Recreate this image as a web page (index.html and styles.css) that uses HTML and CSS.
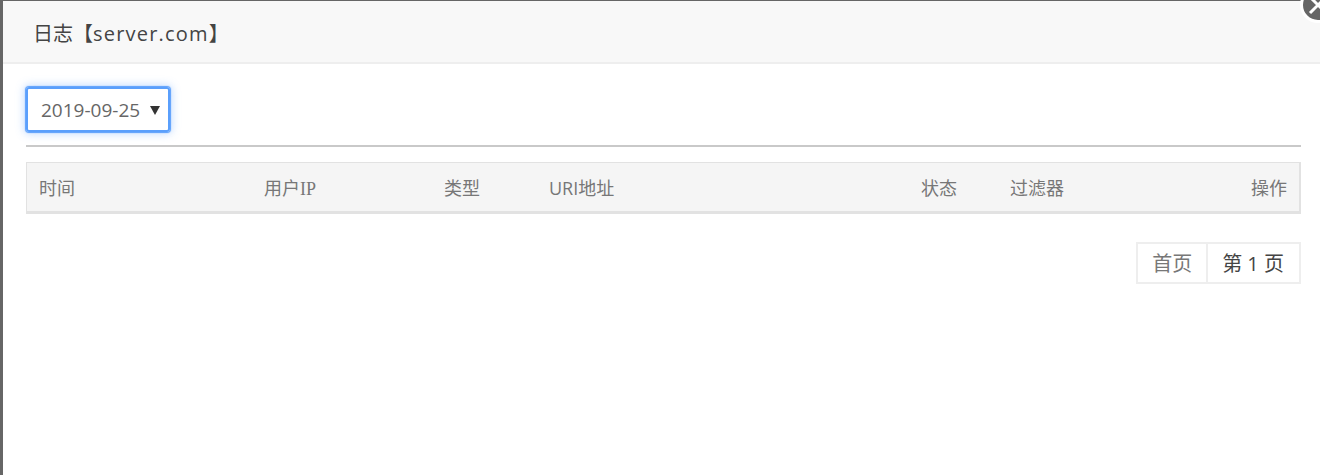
FILE: index.html
```html
<!DOCTYPE html>
<html lang="zh-CN">
<head>
    <meta charset="UTF-8">
    <title>日志</title>
    <link rel="stylesheet" href="styles.css">
</head>
<body>
    <div class="layer">
        <div class="layer-title">日志【<span class="host">server.com</span>】</div>
        <a class="layer-close" href="#">
            <svg viewBox="0 0 30 30" width="30" height="30"><path d="M7 7L23 23M23 7L7 23" stroke="#fff" stroke-width="3" fill="none"/></svg>
        </a>
        <div class="layer-content">
            <div class="date-select" tabindex="0">
                <span>2019-09-25</span>
                <span class="arrow"></span>
            </div>
            <hr class="line">
            <table class="log-table">
                <thead>
                    <tr>
                        <th class="col-time">时间</th>
                        <th class="col-ip">用户<span class="latin">IP</span></th>
                        <th class="col-type">类型</th>
                        <th class="col-uri">URI地址</th>
                        <th class="col-status">状态</th>
                        <th class="col-filter">过滤器</th>
                        <th class="col-op">操作</th>
                    </tr>
                </thead>
            </table>
            <div class="pager">
                <a href="#">首页</a>
                <a href="#">第 1 页</a>
            </div>
        </div>
    </div>
</body>
</html>
```

FILE: styles.css
```css
html, body {
    margin: 0;
    height: 100%;
}
body {
    background: #666;
    padding: 1px 0 0 3px;
    box-sizing: border-box;
    overflow: hidden;
    font-family: "Open Sans", "Noto Sans CJK SC", sans-serif;
    color: #333;
}
.layer {
    position: relative;
    background: #fff;
    height: 100%;
}
.layer-title {
    height: 61px;
    line-height: 65px;
    padding-left: 30px;
    background: #f8f8f8;
    border-bottom: 2px solid #eee;
    font-size: 20px;
    color: #444;
}
.host {
    letter-spacing: 1.2px;
}
.layer-close {
    position: absolute;
    top: -14px;
    right: -16px;
    width: 30px;
    height: 30px;
    background: #666;
    border: 3px solid #fff;
    border-radius: 50%;
}
.layer-close svg {
    display: block;
}
.layer-content {
    padding: 23px 19px 0 23px;
}
.date-select {
    display: flex;
    align-items: center;
    justify-content: space-between;
    box-sizing: border-box;
    width: 144px;
    height: 45px;
    padding: 0 8px 0 13px;
    border: 2px solid #5a9ffc;
    border-radius: 3px;
    box-shadow: 0 0 1px 1px #5a9ffc, 0 0 8px 2px rgba(90, 159, 252, 0.35);
    font-size: 19px;
    color: #666;
    outline: none;
}
.arrow {
    width: 0;
    height: 0;
    margin-top: 2px;
    border-left: 5px solid transparent;
    border-right: 5px solid transparent;
    border-top: 9px solid #333;
}
.line {
    height: 2px;
    margin: 13px 0 15px;
    border: 0;
    background: #c9c9c9;
}
.log-table {
    width: 100%;
    table-layout: fixed;
    border-collapse: separate;
    border-spacing: 0;
    border: 1px solid #e2e2e2;
    border-bottom: 3px solid #e2e2e2;
    border-right-width: 2px;
    background: #f5f5f5;
}
.log-table th {
    height: 48px;
    padding: 0 12px;
    font-size: 18px;
    font-weight: normal;
    text-align: left;
    color: #777;
}
.latin {
    font-family: "Liberation Serif", serif;
}
.col-time { width: 201px; }
.col-ip { width: 156px; }
.col-type { width: 81px; }
.col-uri { width: 348px; }
.col-status { width: 65px; }
.col-filter { width: 176px; }
th.col-op { text-align: right; }
.pager {
    display: flex;
    justify-content: flex-end;
    margin-top: 28px;
}
.pager a {
    height: 38px;
    line-height: 40px;
    padding: 0 15px 0 14px;
    border: 2px solid #eee;
    font-size: 20px;
    color: #444;
    text-decoration: none;
}
.pager a + a {
    border-left: 0;
}
.pager a:first-child {
    padding: 0 14px;
    color: #777;
}
```
